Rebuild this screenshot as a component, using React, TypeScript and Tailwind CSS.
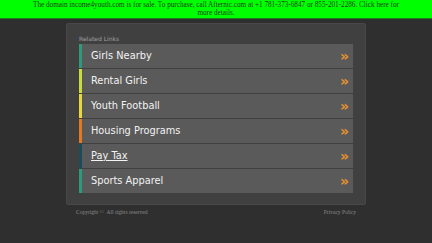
import React from 'react';

const links: { label: string; bar: string; underline?: boolean }[] = [
    { label: 'Girls Nearby', bar: 'bg-[#2c9a7d]' },
    { label: 'Rental Girls', bar: 'bg-[#c9dd3a]' },
    { label: 'Youth Football', bar: 'bg-[#e6d93a]' },
    { label: 'Housing Programs', bar: 'bg-[#e5791f]' },
    { label: 'Pay Tax', bar: 'bg-[#1a4c5c]', underline: true },
    { label: 'Sports Apparel', bar: 'bg-[#2c9a7d]' },
];

const App: React.FC = () => {
    return (
        <div className="w-[432px] h-[243px] bg-[#2f2f2f] overflow-hidden">
            <div className="h-[19px] bg-[#00ff00] border-b border-[#1d7a1d] text-center text-[7.2px] leading-[8px] text-[#1a3d1a] pt-[1px] px-[30px] font-['Liberation_Serif',serif]">
                The domain income4youth.com is for sale. To purchase, call Afternic.com at +1 781-373-6847 or 855-201-2286. Click here for more details.
            </div>
            <div className="mx-auto mt-[4px] w-[300px] bg-[#404040] rounded-[2px] border border-[#484848] pt-[11px] pb-[11px] px-[12px]">
                <p className="text-[6px] leading-[8px] text-[#a0a0a0] mb-[1px] font-['DejaVu_Sans',sans-serif]">Related Links</p>
                <div className="flex flex-col gap-[1px]">
                    {links.map(link => (
                        <div key={link.label} className="flex items-center h-[24px] bg-[#5a5a5a]">
                            <div className={`w-[3px] h-full ${link.bar}`} />
                            <span className={`ml-[9px] flex-1 text-[9.8px] text-[#f2f2f2] font-['DejaVu_Sans',sans-serif] ${link.underline ? 'underline' : ''}`}>
                                {link.label}
                            </span>
                            <span className="mr-[4px] text-[14px] leading-none font-bold text-[#e6922e] font-['DejaVu_Sans',sans-serif]">»</span>
                        </div>
                    ))}
                </div>
            </div>
            <div className="mx-auto w-[280px] flex justify-between mt-[3px] text-[5.5px] text-[#8a8a8a] font-['Liberation_Serif',serif]">
                <span>Copyright ©&nbsp;&nbsp;All rights reserved</span>
                <span>Privacy Policy</span>
            </div>
        </div>
    );
};

export default App;
